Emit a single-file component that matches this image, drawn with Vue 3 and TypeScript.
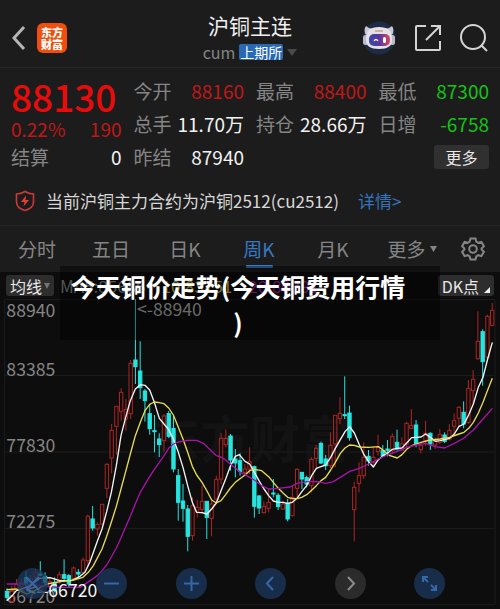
<script setup lang="ts">
type Candle = [kind: 'u' | 'd', high: number, low: number, top: number, bottom: number]

interface Quote {
  label: string
  value: string
  tone: 'up' | 'down' | 'plain'
}

const quotes: Quote[] = [
  { label: '今开', value: '88160', tone: 'up' },
  { label: '最高', value: '88400', tone: 'up' },
  { label: '最低', value: '87300', tone: 'down' },
  { label: '总手', value: '11.70万', tone: 'plain' },
  { label: '持仓', value: '28.66万', tone: 'plain' },
  { label: '日增', value: '-6758', tone: 'down' },
  { label: '昨结', value: '87940', tone: 'plain' },
]

const tabs: string[] = ['分时', '五日', '日K', '周K', '月K']
const activeTab = '周K'

// Chart units: three per pixel at the base width
const candles: Candle[] = [
  ['d', 898, 932, 907, 925], ['u', 890, 943, 905, 938], ['u', 870, 905, 885, 900], ['u', 870, 900, 882, 893],
  ['d', 847, 895, 866, 885], ['u', 858, 900, 868, 880], ['u', 840, 880, 850, 865], ['d', 817, 862, 855, 859],
  ['d', 850, 885, 862, 880], ['u', 865, 900, 878, 892], ['d', 865, 910, 880, 905], ['u', 848, 885, 857, 880],
  ['d', 811, 880, 857, 868], ['d', 855, 895, 860, 885], ['u', 832, 872, 837, 868], ['d', 840, 865, 850, 855],
  ['u', 805, 850, 813, 850], ['u', 677, 830, 682, 815], ['d', 651, 725, 690, 717], ['u', 700, 740, 706, 720],
  ['u', 646, 705, 646, 705], ['u', 522, 628, 526, 598], ['u', 405, 553, 424, 507], ['u', 352, 497, 352, 412],
  ['u', 298, 395, 310, 367], ['u', 330, 425, 362, 390], ['u', 213, 390, 223, 374], ['d', 30, 285, 213, 233],
  ['d', 157, 330, 246, 296], ['d', 300, 398, 306, 335], ['d', 345, 437, 374, 419], ['d', 378, 490, 425, 428],
  ['d', 433, 504, 450, 467], ['u', 375, 488, 381, 455], ['d', 366, 447, 374, 442], ['d', 378, 550, 418, 540],
  ['d', 540, 695, 560, 640], ['d', 585, 698, 636, 658], ['d', 648, 787, 660, 742], ['u', 625, 755, 650, 740],
  ['u', 633, 685, 655, 668], ['u', 590, 675, 637, 661], ['d', 637, 750, 637, 685], ['u', 635, 742, 645, 688],
  ['u', 560, 645, 571, 630], ['u', 432, 585, 448, 570], ['u', 421, 475, 448, 467], ['d', 435, 545, 441, 513],
  ['d', 480, 565, 510, 522], ['d', 493, 560, 515, 547], ['u', 525, 562, 540, 550], ['u', 475, 555, 518, 540],
  ['d', 530, 686, 533, 652], ['d', 618, 675, 621, 657], ['u', 637, 673, 652, 671], ['u', 600, 670, 640, 658],
  ['d', 570, 625, 612, 615], ['d', 612, 663, 619, 653], ['u', 635, 663, 645, 660], ['d', 630, 697, 643, 690],
  ['u', 590, 682, 625, 680], ['u', 538, 625, 541, 598], ['d', 550, 600, 550, 570], ['d', 560, 595, 566, 585],
  ['u', 505, 610, 511, 590], ['u', 468, 540, 478, 508], ['d', 458, 525, 463, 522], ['d', 498, 543, 510, 530],
  ['u', 430, 537, 469, 530], ['u', 379, 535, 379, 465], ['u', 325, 405, 373, 389], ['d', 262, 390, 377, 380],
  ['d', 350, 455, 372, 446], ['u', 578, 757, 595, 662], ['u', 520, 610, 560, 583], ['u', 460, 570, 505, 560],
  ['d', 483, 530, 502, 516], ['u', 473, 530, 505, 520], ['u', 437, 500, 475, 488], ['d', 468, 502, 485, 500],
  ['d', 453, 502, 480, 484], ['u', 433, 495, 442, 485], ['d', 422, 485, 460, 480], ['u', 445, 487, 465, 483],
  ['u', 398, 475, 403, 465], ['u', 360, 420, 410, 418], ['d', 393, 475, 408, 465], ['u', 462, 493, 470, 482],
  ['u', 395, 470, 433, 455], ['d', 430, 483, 433, 465], ['u', 445, 480, 455, 468], ['u', 420, 465, 437, 460],
  ['d', 430, 462, 438, 457], ['u', 405, 455, 424, 450], ['u', 373, 440, 395, 412], ['u', 352, 412, 355, 388],
  ['d', 337, 418, 370, 405], ['u', 273, 405, 298, 400], ['u', 243, 345, 271, 305], ['u', 67, 212, 157, 209],
  ['d', 121, 290, 128, 218], ['u', 77, 212, 82, 205], ['u', 42, 112, 64, 109],
]

const candleX = (i: number): number => 21 + i * 14.27

const averages: { name: string; points: string }[] = [
  {
    name: 'ma5',
    points:
      '20,935 35,922 49,905 70,898 90,890 120,868 150,866 180,875 215,875 240,862 255,850 270,818 292,757 306,720 320,668 334,610 349,530 363,440 377,385 391,335 406,300 421,287 435,289 449,303 463,340 478,388 492,405 506,422 520,450 535,490 549,535 563,590 577,640 590,670 606,671 621,675 635,660 649,642 663,605 677,570 691,532 706,502 718,497 735,517 749,525 763,550 777,575 792,600 806,620 820,636 835,640 849,640 863,643 877,640 891,628 906,607 920,590 935,560 949,538 963,533 977,528 992,505 1006,478 1021,452 1035,428 1049,413 1063,432 1078,467 1092,497 1106,518 1120,534 1135,512 1149,500 1163,492 1177,481 1192,478 1206,477 1220,462 1235,446 1249,445 1263,444 1277,435 1291,445 1306,457 1320,455 1349,448 1363,435 1377,412 1392,405 1406,378 1420,345 1435,295 1449,265 1463,210 1477,160',
  },
  {
    name: 'ma10',
    points:
      '20,902 49,900 80,915 100,907 140,885 180,878 220,873 249,865 265,850 280,830 306,780 320,742 334,700 349,652 363,600 377,548 391,495 406,440 421,400 435,365 449,346 463,339 478,341 492,344 506,357 520,378 535,415 549,450 563,490 577,532 590,558 606,580 621,606 635,633 649,642 663,635 677,617 691,597 706,580 720,569 735,558 749,545 763,541 785,545 806,563 820,580 835,598 849,612 863,625 877,629 891,629 905,625 920,617 935,604 949,590 963,575 977,565 992,543 1006,520 1021,493 1035,477 1049,468 1063,469 1078,474 1106,475 1135,473 1149,483 1170,500 1192,507 1206,497 1220,481 1235,470 1263,460 1291,453 1320,450 1349,445 1377,435 1392,430 1406,418 1420,400 1435,372 1449,340 1463,303 1477,268',
  },
  {
    name: 'ma20',
    points:
      '20,885 77,885 120,890 170,895 240,895 263,880 292,860 306,845 320,828 334,804 349,777 363,746 377,713 391,682 406,644 421,610 435,586 449,563 463,541 478,520 492,500 506,478 520,465 535,459 563,454 590,454 610,463 635,487 649,500 663,504 677,513 691,526 706,537 720,549 735,557 749,565 763,573 785,590 806,600 835,598 870,594 891,583 920,578 950,577 977,583 1000,578 1021,565 1049,547 1078,538 1106,525 1135,510 1170,495 1192,487 1220,475 1249,468 1277,463 1306,473 1334,477 1363,463 1392,447 1420,423 1449,390 1477,358',
  },
]

const priceAxis = [
  { price: '88940', y: 84 },
  { price: '83385', y: 261 },
  { price: '77830', y: 489 },
  { price: '72275', y: 718 },
  { price: '66720', y: 942 },
]

const gridRows: number[] = [32, 260, 489, 718, 947]

const controls = [
  { label: '收起', path: 'M9 9 22 22M22 9 9 22', tone: 'blue' },
  { label: '缩小', path: 'M8 15.5H23', tone: 'blue' },
  { label: '放大', path: 'M8 15.5H23M15.500 8V23', tone: 'blue' },
  { label: '向左', path: 'M18 9 12 15.500 18 22', tone: 'blue' },
  { label: '向右', path: 'M13 9 19 15.500 13 22', tone: 'grey' },
  { label: '全屏', path: 'M14 14 9 9M9 14V9H14M17 17 22 22M22 17V22H17', tone: 'blue' },
]
</script>

<template>
  <main class="page">
    <header class="header">
      <div class="side">
        <button class="icon-button" aria-label="返回">
          <svg width="14" height="26" viewBox="0 0 14 26"><path d="M12 2 2 13 12 24" class="stroke back" /></svg>
        </button>
        <a href="#" class="brand"><span>东方</span><span>财富</span></a>
      </div>
      <div class="heading">
        <h1>沪铜主连</h1>
        <div class="subtitle">
          <span>cum</span>
          <span class="exchange">上期所</span>
          <svg width="10" height="7" viewBox="0 0 10 7"><path d="M0 0H10L5 7Z" fill="#4a4a4a" /></svg>
        </div>
      </div>
      <div class="side actions">
        <button class="icon-button" aria-label="智能助手">
          <svg width="34" height="34" viewBox="0 0 34 34">
            <circle cx="17" cy="17" r="16.500" fill="#1d2b45" />
            <path d="M4 14Q1 9 4 5Q7 8 11 8ZM30 14Q33 9 30 5Q27 8 23 8Z" fill="#c9c8d6" />
            <rect x="1" y="14" width="6" height="10" rx="2.500" fill="#b9bacb" />
            <rect x="27" y="14" width="6" height="10" rx="2.500" fill="#b9bacb" />
            <path d="M4 17Q4 6 17 6Q30 6 30 17V19Q30 28 17 28Q4 28 4 19Z" fill="#e4e0e4" />
            <path d="M13 10H21" stroke="#c7a58e" stroke-width="1.500" />
            <defs>
              <linearGradient id="visor">
                <stop offset="0" stop-color="#3847a8" />
                <stop offset="0.500" stop-color="#58379f" />
                <stop offset="1" stop-color="#d74862" />
              </linearGradient>
            </defs>
            <rect x="7" y="13" width="21" height="12" rx="5" fill="url(#visor)" />
            <path d="M12 20Q14 17 16 20" fill="none" stroke="#fff" stroke-width="1.300" />
            <rect x="21" y="16" width="3" height="6" rx="1.500" fill="#fff" />
          </svg>
        </button>
        <button class="icon-button" aria-label="分享">
          <svg width="28" height="28" viewBox="0 0 28 28">
            <path d="M12 2H3Q2 2 2 3V25Q2 26 3 26H25Q26 26 26 25V17M17 2H26V11M26 2 12 16" class="stroke" />
          </svg>
        </button>
        <button class="icon-button" aria-label="搜索">
          <svg width="28" height="28" viewBox="0 0 28 28">
            <circle cx="13" cy="13" r="12" class="stroke" /><path d="M21 21 27 27" class="stroke" />
          </svg>
        </button>
      </div>
    </header>

    <section class="quote">
      <div class="last">
        <strong class="price">88130</strong>
        <div class="change"><span>0.22%</span><span>190</span></div>
        <div class="cell"><span>结算</span><b class="plain">0</b></div>
      </div>
      <div v-for="q in quotes" :key="q.label" class="cell">
        <span>{{ q.label }}</span><b :class="q.tone">{{ q.value }}</b>
      </div>
      <div class="more-cell"><button class="more">更多</button></div>
    </section>

    <section class="notice">
      <svg width="20" height="22" viewBox="0 0 20 22">
        <path d="M10 1.500Q14 4 18.500 4V12Q18.500 18 10 20.500Q1.500 18 1.500 12V4Q6 4 10 1.500Z" fill="none" stroke="#c93a36" stroke-width="1.600" />
        <path d="M11 5.500 6 12H9.500L8.500 16.500 14 10H10.500Z" fill="#ee3b35" />
      </svg>
      <span>当前沪铜主力合约为沪铜2512(cu2512)</span>
      <a href="#">详情&gt;</a>
    </section>

    <nav class="tabs">
      <button v-for="tab in tabs" :key="tab" :class="{ active: tab === activeTab }">{{ tab }}</button>
      <button>更多<svg width="7" height="6" viewBox="0 0 7 6"><path d="M0 0H7L3.500 6Z" fill="#858585" /></svg></button>
      <button class="settings" aria-label="设置">
        <svg width="24" height="24" viewBox="0 0 24 24">
          <path d="M9.500 1.500H14.500L15.300 4.600 17.300 5.800 20.400 4.900 22.900 9.200 20.600 11.500V12.500L22.900 14.800 20.400 19.100 17.300 18.200 15.300 19.400 14.500 22.500H9.500L8.700 19.400 6.700 18.200 3.600 19.100 1.100 14.800 3.400 12.500V11.500L1.100 9.200 3.600 4.900 6.700 5.800 8.700 4.600Z" />
          <circle cx="12" cy="12" r="3.800" />
        </svg>
      </button>
    </nav>

    <section class="chart">
      <div class="toolbar">
        <button class="chip">均线<svg width="6" height="6" viewBox="0 0 6 6"><path d="M0 0H6L3 6Z" fill="#747474" /></svg></button>
        <div class="legend">
          <span>MA5:85686</span><span class="yellow">10:83751</span><span class="purple">20:80391</span>
        </div>
        <button class="chip">DK点<svg class="corner" width="6" height="6" viewBox="0 0 6 6"><path d="M6 0V6H0Z" fill="#eee" /></svg></button>
      </div>

      <svg class="plot" viewBox="0 30 1500 927" role="img" aria-label="周K线图">
        <text x="750" y="508" class="watermark">东方财富</text>
        <path v-for="y in gridRows" :key="y" :d="`M14 ${y}H1485`" class="grid" />
        <path d="M14 32V947M1485 32V947" class="grid" />
        <text v-for="p in priceAxis" :key="p.price" x="19" :y="p.y" class="axis">{{ p.price }}</text>
        <g v-for="(c, i) in candles" :key="i" :class="c[0] === 'u' ? 'rise' : 'fall'">
          <path v-if="c[0] === 'u'" :d="`M${candleX(i)} ${c[1]}V${c[3]}M${candleX(i)} ${c[4]}V${c[2]}`" />
          <path v-else :d="`M${candleX(i)} ${c[1]}V${c[2]}`" />
          <rect :x="candleX(i) - 5" :y="c[3]" width="10" :height="c[4] - c[3]" />
        </g>
        <polyline v-for="a in averages" :key="a.name" :points="a.points" :class="['average', a.name]" />
        <text x="411" y="82" class="axis high">&lt;-88940</text>
        <text x="292" y="923" class="axis low">&lt;--66720</text>
      </svg>

      <div class="controls">
        <button v-for="c in controls" :key="c.label" :class="c.tone" :aria-label="c.label">
          <svg width="31" height="31" viewBox="0 0 31 31"><path :d="c.path" /></svg>
        </button>
      </div>

      <h2 class="caption">今天铜价走势(今天铜费用行情)</h2>
    </section>
  </main>
</template>

<style>
body {
  margin: 0;
  background: #0d0d0d;
}
</style>

<style scoped>
.page {
  background: #1c1c1c;
  color: #e8e8e8;
  font-family: "Noto Sans CJK SC", "Noto Sans", sans-serif;
  font-size: 19px;
  line-height: 24px;
}

button {
  margin: 0;
  padding: 0;
  border: 0;
  background: none;
  color: inherit;
  font: inherit;
  cursor: pointer;
}

a {
  text-decoration: none;
}

svg {
  display: block;
  flex: none;
}

.header {
  display: grid;
  grid-template-columns: 1fr auto 1fr;
  align-items: center;
  height: 68px;
  padding: 6px 12px 0;
  box-sizing: border-box;
  border-bottom: 1px solid #282828;
}

.side {
  display: flex;
  align-items: center;
  gap: 11px;
  padding-top: 2px;
}

.actions {
  justify-content: flex-end;
  gap: 18px;
}

.stroke {
  fill: none;
  stroke: #d4d4d4;
  stroke-width: 2;
}

.back {
  stroke: #b5b5b5;
  stroke-width: 3;
}

.brand {
  display: flex;
  flex-direction: column;
  align-items: center;
  justify-content: center;
  width: 30px;
  height: 30px;
  border-radius: 6px;
  background: #f04e0c;
  color: #fff;
  font-size: 11px;
  font-weight: 900;
  line-height: 12px;
}

.heading {
  display: flex;
  flex-direction: column;
  align-items: center;
  gap: 3px;
}

h1 {
  margin: 0;
  color: #f0f0f0;
  font-size: 21px;
  font-weight: 400;
  line-height: 28px;
}

.subtitle {
  display: flex;
  align-items: center;
  gap: 4px;
  color: #858585;
  font-size: 16px;
  line-height: 20px;
}

.exchange {
  padding: 0 1px;
  border-radius: 2px;
  background: #2869b3;
  color: #fff;
  font-size: 14px;
  line-height: 16px;
}

.quote {
  display: grid;
  grid-template-columns: repeat(4, 1fr);
  grid-auto-rows: 33px;
  column-gap: 12px;
  padding: 6px 11px 0;
}

.last {
  display: flex;
  flex-direction: column;
  grid-row: span 3;
}

.price {
  color: #e60c0c;
  font-size: 37px;
  font-weight: 500;
  line-height: 44px;
}

.change {
  display: flex;
  justify-content: space-between;
  color: #c01818;
  line-height: 22px;
}

.cell {
  display: flex;
  align-items: center;
  justify-content: space-between;
  height: 33px;
  color: #858585;
  white-space: nowrap;
}

.cell b {
  font-weight: 400;
}

.cell .up {
  color: #c01818;
}

.cell .down {
  color: #14c414;
}

.cell .plain {
  color: #f2f2f2;
}

.more-cell {
  grid-column: 4;
  display: flex;
  align-items: center;
  justify-content: flex-end;
}

.more {
  width: 55px;
  border-radius: 3px;
  background: #303030;
  font-size: 16px;
}

.notice {
  display: flex;
  align-items: center;
  height: 53px;
  padding: 4px 15px 0;
  box-sizing: border-box;
  border-bottom: 1px solid #262626;
  color: #d8d8d8;
  font-size: 17px;
}

.notice span {
  margin: 0 19px 0 11px;
}

.notice a {
  color: #3574bd;
}

.tabs {
  display: grid;
  grid-template-columns: repeat(5, 74fr) 84fr 38fr;
  height: 46px;
  padding-right: 8px;
  color: #858585;
}

.tabs button {
  position: relative;
  display: flex;
  align-items: center;
  justify-content: center;
  gap: 4px;
}

.tabs .active {
  color: #3878c4;
}

.tabs .active::after {
  content: "";
  position: absolute;
  bottom: 4px;
  width: 27px;
  height: 3px;
  border-radius: 1px;
  background: #3878c4;
}

.settings svg {
  fill: none;
  stroke: #858585;
  stroke-width: 2;
}

.chart {
  position: relative;
  background: #0d0d0d;
}

.toolbar {
  display: flex;
  align-items: center;
  gap: 6px;
  height: 27px;
  padding: 0 6px;
}

.chip {
  display: flex;
  align-items: center;
  gap: 2px;
  height: 21px;
  padding: 0 4px;
  border-radius: 3px;
  background: #2d2d2d;
  color: #e8e8e8;
  font-size: 16px;
  line-height: 20px;
  white-space: nowrap;
}

.corner {
  align-self: flex-end;
  margin: 0 0 3px 3px;
}

.legend {
  display: flex;
  flex: 1;
  gap: 16px;
  color: #8c8c8c;
  font-size: 17px;
}

.yellow {
  color: #c9bd3c;
}

.purple {
  color: #a01fa0;
}

.plot {
  width: 100%;
  height: auto;
  overflow: visible;
}

.grid {
  fill: none;
  stroke: #1d1d1d;
  stroke-width: 3;
}

.watermark {
  fill: #131313;
  font-size: 150px;
  font-weight: 700;
  text-anchor: middle;
}

.axis {
  fill: #858585;
  font-size: 53px;
}

.high {
  fill: #b0b0b0;
}

.low {
  fill: #f4f4f4;
  text-anchor: end;
}

.rise {
  fill: none;
  stroke: #ad2522;
  stroke-width: 3;
}

.fall {
  fill: #25e5df;
  stroke: #25e5df;
  stroke-width: 3;
}

.average {
  fill: none;
  stroke-width: 4;
  stroke-linejoin: round;
}

.ma5 {
  stroke: #f5f5f5;
}

.ma10 {
  stroke: #e8dc55;
}

.ma20 {
  stroke: #a813a8;
}

.controls {
  position: absolute;
  right: 11%;
  bottom: 9px;
  left: 17px;
  display: flex;
  justify-content: space-between;
}

.controls button {
  width: 31px;
  height: 31px;
  border-radius: 50%;
}

.controls path {
  fill: none;
  stroke: #3468a8;
  stroke-width: 2;
}

.controls .blue {
  background: rgba(27, 56, 94, 0.75);
}

.controls .grey {
  background: #2b2b2b;
}

.controls .grey path {
  stroke: #8c8c8c;
}

.caption {
  position: absolute;
  top: -6px;
  right: 12%;
  left: 12%;
  margin: 0;
  padding: 2px 34px 0 10px;
  height: 72px;
  background: rgba(0, 0, 0, 0.4);
  color: #fff;
  font-size: 25px;
  font-weight: 700;
  line-height: 36px;
  text-align: center;
  word-break: break-all;
  line-break: anywhere;
}
</style>
